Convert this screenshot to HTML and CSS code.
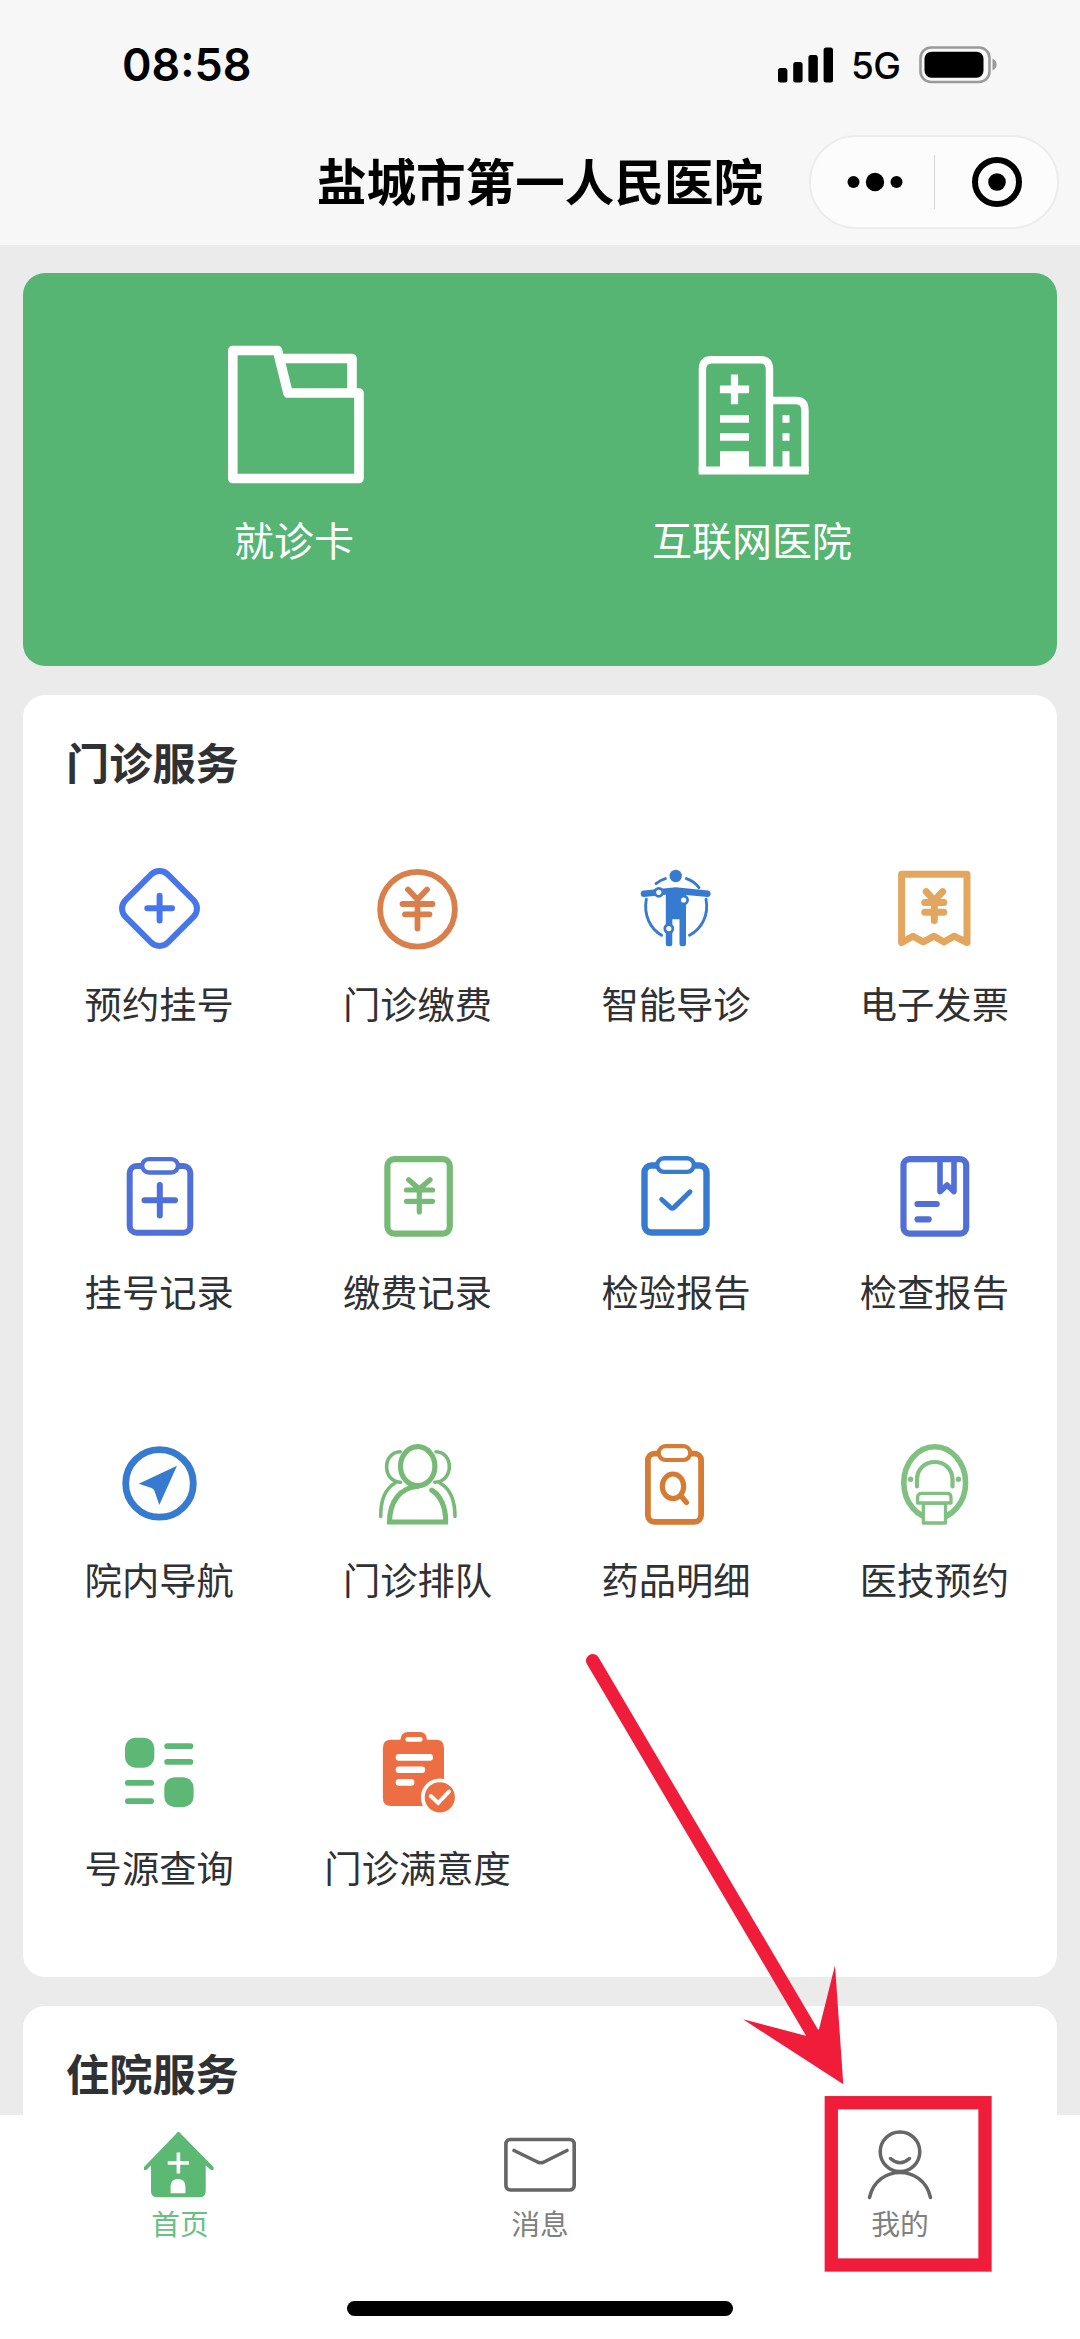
FILE: index.html
```html
<!DOCTYPE html>
<html lang="zh-CN">
<head>
<meta charset="utf-8">
<title>盐城市第一人民医院</title>
<link rel="stylesheet" href="styles.css">
</head>
<body>
<div class="screen">
  <header class="header">
    <div class="status">
      <span class="time">08:58</span>
      <div class="status-right">
        <svg class="signal" viewBox="0 0 56 36"><rect x="0" y="21" width="9.4" height="14.5" rx="2.5"/><rect x="15.2" y="15" width="9.4" height="20.5" rx="2.5"/><rect x="30.4" y="8" width="9.4" height="27.5" rx="2.5"/><rect x="45.6" y="0.5" width="9.4" height="35" rx="2.5"/></svg>
        <span class="network">5G</span>
        <svg class="battery" viewBox="0 0 80 38"><rect x="1.5" y="1.5" width="69" height="34.5" rx="10.5" fill="none" stroke="#9a9a9a" stroke-width="2.6"/><rect x="5.5" y="5.7" width="59" height="26" rx="7"/><path d="M73.5 12.5C79 15 79 22 73.5 24.5Z" fill="#9a9a9a"/></svg>
      </div>
    </div>
    <div class="navbar">
      <h1 class="title">盐城市第一人民医院</h1>
      <div class="capsule">
        <svg class="dots" viewBox="0 0 60 60"><circle cx="8.5" cy="30" r="6"/><circle cx="30" cy="30" r="9.2"/><circle cx="51.5" cy="30" r="6"/></svg>
        <span class="divider"></span>
        <svg class="target" viewBox="0 0 60 60"><circle cx="30" cy="30" r="22" fill="none" stroke="#000" stroke-width="6"/><circle cx="30" cy="30" r="8.8"/></svg>
      </div>
    </div>
  </header>

  <main class="content">
    <section class="hero">
      <div class="hero-item">
        <svg class="hero-icon" viewBox="0 0 142 142" fill="none" stroke="#fff" stroke-width="9.600" stroke-linejoin="round"><path d="M9.800 6.500H54.500L65 49H136V134.500H9.800Z"/><path d="M59.500 14.500H129V47"/></svg>
        <span class="hero-label">就诊卡</span>
      </div>
      <div class="hero-item">
        <svg class="hero-icon" viewBox="0 0 142 142"><g fill="none" stroke="#fff" stroke-width="7.400"><path d="M21.400 127.500V25.700q0-10 9-10H79.500q9 0 9 10V127.500"/><path d="M88.500 56.500H115q9 0 9 10V127.500"/></g><path fill="#fff" d="M17.700 122.500H127.700V130.500H17.700ZM49.900 30.500h7.200v11h11v7.800h-11v11h-7.200v-11h-11v-7.800h11ZM39 71.200h29v7.600h-29ZM39 89.200h29v7.600h-29ZM39 107.200h29v20h-29ZM101.500 71.200h7v7.600h-7ZM101.500 89.200h7v7.600h-7ZM101.500 107.200h7v20h-7Z"/></svg>
        <span class="hero-label">互联网医院</span>
      </div>
    </section>

    <section class="card outpatient">
      <h2 class="card-title">门诊服务</h2>
      <div class="grid">
        <div class="item">
          <svg class="icon" viewBox="0 0 81 81" fill="none" stroke="#4776ea" stroke-width="6" stroke-linecap="round"><rect x="10.500" y="10.500" width="60" height="60" rx="12" transform="rotate(45 40.500 40.500)"/><path d="M28.300 40.200H53M40.600 27.800V52.600"/></svg>
          <span class="label">预约挂号</span>
        </div>
        <div class="item">
          <svg class="icon" viewBox="0 0 81 81" fill="none" stroke="#d97f4b" stroke-width="5.800" stroke-linecap="round" stroke-linejoin="round"><circle cx="40.500" cy="41.200" r="37.400"/><path d="M31 21.600 40.500 31.500 50 21.600M25.500 36H55.500M28 46.300H52.500M40.500 32V60.600"/></svg>
          <span class="label">门诊缴费</span>
        </div>
        <div class="item">
          <svg class="icon" viewBox="0 0 81 81" fill="#377bd1"><circle cx="40.700" cy="8" r="6.200"/><path d="M9 22.400 40.700 19.200 73 22.400a3.400 3.400 0 0 1-.5 6.700L51 27V76q0 2.300-2.300 2.300h-2q-2.200 0-2.200-2.300V51.300H37.300V76q0 2.300-2.200 2.300h-2q-2.300 0-2.300-2.300V26.700L9 29a3.300 3.300 0 0 1 0-6.600Z"/><g fill="none" stroke="#377bd1" stroke-width="2.900" stroke-linecap="round"><path d="M11.300 31.300C8.500 47 15 60.500 26.600 67.300M71 31.300C74 47 67 60.500 54.500 67.300M21 15.600Q25.500 12 30.400 10.600M51.400 10.600Q59 13 64 19.600"/></g><g fill="#fff" stroke="#377bd1" stroke-width="2.800"><circle cx="23.800" cy="24.300" r="4"/><circle cx="48.600" cy="32" r="4"/><circle cx="33.800" cy="60.600" r="4"/></g></svg>
          <span class="label">智能导诊</span>
        </div>
        <div class="item">
          <svg class="icon" viewBox="0 0 81 81" fill="none" stroke="#e3a65f" stroke-width="7" stroke-linecap="round" stroke-linejoin="round"><path d="M7.600 74.500V6.200H73V74.500L60 68.200 50 74 40 68.200 29.300 74 19 68.200Z"/><path d="M32.200 23.600 40.300 32.500 48.700 23.600M30.700 34.600H49.800M30.700 44.300H49.800M40.300 34V52.600"/></svg>
          <span class="label">电子发票</span>
        </div>

        <div class="item">
          <svg class="icon" viewBox="0 0 81 81" fill="none" stroke="#4f6fd9" stroke-width="6" stroke-linecap="round"><rect x="10.700" y="10" width="60.600" height="66.700" rx="7"/><rect x="23.200" y="3.100" width="35.800" height="13.400" rx="6.700" fill="#fff" stroke-width="4.400"/><path d="M25.500 44.300H56M40.800 29V59.500"/></svg>
          <span class="label">挂号记录</span>
        </div>
        <div class="item">
          <svg class="icon" viewBox="0 0 81 81" fill="none" stroke="#76ba76" stroke-width="6.200" stroke-linecap="round" stroke-linejoin="round"><rect x="10.400" y="3.100" width="62.400" height="74.500" rx="7"/><path stroke-width="5.200" d="M31.700 23.700 42.300 33 53 23.700M29.500 34H55.500M29.500 45.300H55.500M42.300 34V56"/></svg>
          <span class="label">缴费记录</span>
        </div>
        <div class="item">
          <svg class="icon" viewBox="0 0 81 81" fill="none" stroke="#377bd1" stroke-width="6.400" stroke-linecap="round" stroke-linejoin="round"><rect x="9.500" y="9.500" width="62" height="67" rx="7"/><rect x="22.200" y="2.200" width="36.700" height="13.700" rx="6.800" fill="#fff" stroke-width="4.400"/><path stroke-width="5" d="M26.700 43.500 35.500 51.500Q37.300 53 39.100 51.400L55 35.800"/></svg>
          <span class="label">检验报告</span>
        </div>
        <div class="item">
          <svg class="icon" viewBox="0 0 81 81" fill="none" stroke="#526fd8" stroke-width="6.200" stroke-linecap="round" stroke-linejoin="round"><rect x="9.500" y="3.100" width="62.700" height="74.500" rx="6"/><path stroke-width="5.600" d="M46 4V35.600L53 29 60 35.600V4"/><path d="M23.500 48H42.700M23.500 63.300H34.700"/></svg>
          <span class="label">检查报告</span>
        </div>

        <div class="item">
          <svg class="icon" viewBox="0 0 81 81"><circle cx="40.500" cy="39.400" r="33.800" fill="none" stroke="#377bd1" stroke-width="6.800"/><path fill="#377bd1" d="M58 21.800 19.700 39.700 32.500 44Q34.800 44.800 35.500 47L40.300 60.900Z"/></svg>
          <span class="label">院内导航</span>
        </div>
        <div class="item">
          <svg class="icon" viewBox="0 0 81 81" fill="none" stroke="#76ba76" stroke-width="5.200" stroke-linecap="round"><ellipse cx="40.700" cy="22.200" rx="17.200" ry="19.500"/><path d="M40.700 42.500C23 43.500 12.500 58 12.500 78H68.600C69 63 63.500 51.500 54.800 46.200"/><path stroke-width="3.600" d="M23.300 7.700C5 8 5 38 23.700 38.300M18 39C8 45 3.500 55 3.700 72.500M59 7.700C77 8 77 38 57.700 38.300M63 39C73.500 45 78 56 78 72.500"/></svg>
          <span class="label">门诊排队</span>
        </div>
        <div class="item">
          <svg class="icon" viewBox="0 0 81 81" fill="none" stroke="#d67b33" stroke-width="5.800" stroke-linecap="round"><rect x="12.900" y="9.600" width="53.200" height="68.200" rx="6.500"/><rect x="23.700" y="2.100" width="31.600" height="13.900" rx="6.900" fill="#fff" stroke-width="4.200"/><ellipse cx="38" cy="42.300" rx="10.700" ry="12.300" stroke-width="5.200"/><path stroke-width="5.200" d="M46 52 51.500 58.500"/></svg>
          <span class="label">药品明细</span>
        </div>
        <div class="item">
          <svg class="icon" viewBox="0 0 81 81" fill="none" stroke="#80c080" stroke-width="5.600" stroke-linecap="round" stroke-linejoin="round"><ellipse cx="40.700" cy="38.700" rx="30.900" ry="35.900"/><path stroke-width="4.200" d="M23 42.500V36C23 12 58.500 12 58.500 36V42.500"/><g fill="#fff" stroke-width="3.300"><path d="M29.300 59H51.500V79H29.300Z"/><path d="M23.600 59V53.500Q23.600 49.400 28 49.400H53Q57 49.400 57 53.500V59Z"/></g><circle cx="16.600" cy="35.300" r="2.700" fill="#80c080" stroke="none"/><circle cx="64.400" cy="35.300" r="2.700" fill="#80c080" stroke="none"/></svg>
          <span class="label">医技预约</span>
        </div>

        <div class="item">
          <svg class="icon" viewBox="0 0 81 81" fill="#5cb874"><rect x="6" y="5.700" width="29.300" height="30" rx="10.500"/><rect x="45.300" y="45.200" width="29.300" height="30" rx="10.500"/><rect x="45.300" y="11.300" width="29" height="5.700" rx="2.800"/><rect x="45.300" y="27" width="29" height="5.700" rx="2.800"/><rect x="6" y="48" width="29" height="5.700" rx="2.800"/><rect x="6" y="66.300" width="29" height="5.700" rx="2.800"/></svg>
          <span class="label">号源查询</span>
        </div>
        <div class="item">
          <svg class="icon" viewBox="0 0 81 81" fill="#ec6e42"><path d="M14 7.700H23.400Q24 0 31 0H43Q49.500 0 50 7.700H59Q67 7.700 67 16V74H14Q5.900 74 5.900 66V16Q5.900 7.700 14 7.700Z"/><g fill="#fff"><rect x="28.400" y="5" width="17.200" height="4.700" rx="2.300"/><rect x="18.700" y="22" width="37.300" height="6.700" rx="3.300"/><rect x="18.700" y="34.400" width="29.500" height="6.700" rx="3.300"/><rect x="18.700" y="47" width="18.700" height="6.700" rx="3.300"/></g><circle cx="62.800" cy="65.300" r="17" stroke="#fff" stroke-width="3.800"/><path d="M53.800 64 61.200 71 72 59.500" fill="none" stroke="#fff" stroke-width="4" stroke-linecap="round"/></svg>
          <span class="label">门诊满意度</span>
        </div>
      </div>
    </section>

    <section class="card inpatient">
      <h2 class="card-title">住院服务</h2>
    </section>
  </main>

  <nav class="tabbar">
    <div class="tabs">
      <div class="tab active">
        <svg class="tab-icon" viewBox="0 0 72 72"><path fill="#5bb974" d="M34.500 2.800Q36 3.200 37 5L69.500 38V41H67L61.700 36.500V62Q61.700 68.300 55.500 68.300H13.500Q7 68.300 7 62V36.500L2.500 41H0V38L32 5Q33 3.200 34.500 2.800Z"/><path d="M23.700 34H45M34.400 23.500V44.500" stroke="#fff" stroke-width="3.600"/><path d="M26.600 64.300V57Q27 50 34 50T41.400 57V64.300Z" fill="#fff"/></svg>
        <span class="tab-label">首页</span>
      </div>
      <div class="tab">
        <svg class="tab-icon" viewBox="0 0 72 72" fill="none" stroke="#666" stroke-width="3.600" stroke-linecap="round"><rect x="1.900" y="10.500" width="68.300" height="50.500" rx="4.500"/><path d="M10 21.500 32.500 32.500Q36.800 35 41 32.500L63 21.500"/></svg>
        <span class="tab-label">消息</span>
      </div>
      <div class="tab">
        <svg class="tab-icon" viewBox="0 0 72 72" fill="none" stroke="#666" stroke-width="3.500" stroke-linecap="round"><circle cx="36" cy="22.700" r="19.800"/><path d="M26.500 29.500Q36 38 45.500 29.500M5.500 68.500C13 35 59 35 66.500 68.500"/></svg>
        <span class="tab-label">我的</span>
      </div>
    </div>
    <div class="home-indicator"></div>
  </nav>

  <svg class="annotation" viewBox="0 0 1080 2339"><path d="M592.700 1660.700 814 2036" stroke="#ef1c3a" stroke-width="13.400" stroke-linecap="round"/><path d="M843.300 2084.300 835 1965.300 819 2029.300 806.700 2036 743 2019.300Z" fill="#ef1c3a"/><rect x="831.300" y="2102.700" width="153.700" height="162.300" fill="none" stroke="#ef1c3a" stroke-width="13.300"/></svg>
</div>
</body>
</html>
```
FILE: styles.css
```css
* {
  box-sizing: border-box;
  margin: 0;
  padding: 0;
}

body {
  font-family: "Noto Sans CJK SC", "Noto Sans", sans-serif;
  color: #2f3133;
}

svg {
  display: block;
  flex: none;
  overflow: visible;
}

.screen {
  position: relative;
  display: flex;
  flex-direction: column;
  width: 1080px;
  height: 2339px;
  overflow: hidden;
  background: #ebebeb;
}

/* status bar and title */
.header {
  flex: none;
  height: 245px;
  background: #f7f7f7;
  color: #000;
}

.status {
  display: flex;
  justify-content: space-between;
  align-items: center;
  height: 130px;
  padding: 0 81px 0 122px;
  font-family: Inter, "Liberation Sans", sans-serif;
}

.time {
  font-size: 44.8px;
  font-weight: 600;
}

.status-right {
  display: flex;
  align-items: center;
}

.signal {
  width: 56px;
  height: 36px;
  margin-right: 17px;
}

.network {
  width: 52px;
  margin-right: 16px;
  font-size: 37px;
  font-weight: 500;
  letter-spacing: -0.5px;
}

.battery {
  width: 80px;
  height: 38px;
}

.navbar {
  display: grid;
  grid-template-columns: 271px 1fr 250px;
  align-items: center;
  height: 103px;
  padding-right: 21px;
}

.title {
  grid-column: 2;
  padding-bottom: 5px;
  font-size: 49.6px;
  line-height: 60px;
  font-weight: 700;
  text-align: center;
}

.capsule {
  display: grid;
  grid-template-columns: 60px 1fr 60px;
  align-items: center;
  height: 94px;
  padding: 0 30px 0 34px;
  border: 2px solid #ececec;
  border-radius: 47px;
  background: #fcfcfc;
}

.dots,
.target {
  width: 60px;
  height: 60px;
}

.divider {
  width: 1px;
  height: 54px;
  margin-left: 29px;
  background: #d4d4d4;
}

/* scrolling content */
.content {
  flex: 1;
  display: flex;
  flex-direction: column;
  gap: 29px;
  min-height: 0;
  overflow: hidden;
  padding: 28px 23px 0;
}

.hero {
  flex: none;
  display: grid;
  grid-template-columns: 458px 458px;
  height: 393px;
  padding: 71px 0 0 42px;
  border-radius: 22px;
  background: #57b574;
}

.hero-item {
  display: flex;
  flex-direction: column;
  align-items: center;
}

.hero-icon {
  width: 142px;
  height: 142px;
}

.hero-label {
  margin-top: 23px;
  font-size: 40px;
  line-height: 60px;
  color: #fff;
}

.card {
  flex: none;
  border-radius: 22px;
  background: #fff;
}

.outpatient {
  height: 1282px;
}

.inpatient {
  height: 300px;
}

.card-title {
  padding: 36px 0 0 43px;
  font-size: 43.2px;
  line-height: 60px;
  font-weight: 700;
}

.grid {
  display: grid;
  grid-template-columns: repeat(4, 258.4px);
  grid-auto-rows: 288px;
  padding: 77px 0 0 7px;
}

.item {
  display: flex;
  flex-direction: column;
  align-items: center;
}

.icon {
  width: 81px;
  height: 81px;
}

.label {
  margin-top: 24px;
  font-size: 37.3px;
  line-height: 60px;
  white-space: nowrap;
}

/* bottom tab bar */
.tabbar {
  flex: none;
  display: flex;
  flex-direction: column;
  align-items: center;
  justify-content: space-between;
  height: 224px;
  padding: 14px 0 23px;
  background: #fff;
}

.tabs {
  display: grid;
  grid-template-columns: repeat(3, 1fr);
  width: 100%;
}

.tab {
  display: flex;
  flex-direction: column;
  align-items: center;
  color: #808080;
}

.tab.active {
  color: #67c183;
}

.tab-icon {
  width: 72px;
  height: 72px;
}

.tab-label {
  margin-top: 1px;
  font-size: 28.8px;
  line-height: 42px;
}

.home-indicator {
  width: 386px;
  height: 15px;
  border-radius: 8px;
  background: #000;
}

/* pointer drawn over the page */
.annotation {
  position: absolute;
  inset: 0;
  width: 1080px;
  height: 2339px;
  fill: none;
}
```
